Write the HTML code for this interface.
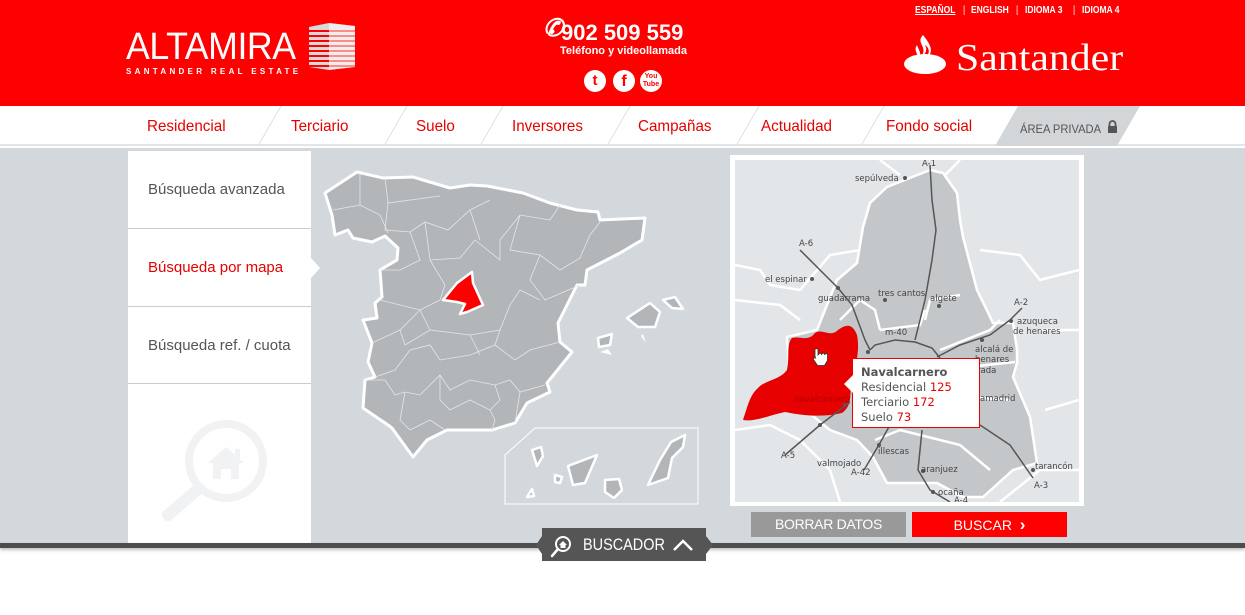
<!DOCTYPE html>
<html><head><meta charset="utf-8"><style>
*{margin:0;padding:0;box-sizing:border-box}
body{width:1245px;height:615px;overflow:hidden;background:#fff;font-family:"Liberation Sans",sans-serif;position:relative}
.abs{position:absolute}
#hdr{left:0;top:0;width:1245px;height:106px;background:#ff0000}
#nav{left:0;top:106px;width:1245px;height:40px;background:#fff;border-bottom:2px solid #e2e4e6}
.ni{position:absolute;top:118px;font-size:16px;color:#e60000;white-space:nowrap;transform:scaleX(.95);transform-origin:left}
.sep{position:absolute;top:106px;width:1px;height:39px;background:#dcdcdc;transform:skewX(-30deg);transform-origin:bottom}
#main{left:0;top:148px;width:1245px;height:395px;background:#d3d8dc}
#side{left:128px;top:151px;width:183px;height:392px;background:#fff}
.si{position:absolute;left:20px;font-size:15px;color:#555;white-space:nowrap}
.hl{position:absolute;left:0;width:183px;height:1px;background:#ccc}
#bar{left:0;top:543px;width:1245px;height:5px;background:#4d4d4d;box-shadow:0 2px 3px rgba(0,0,0,.25)}
.lang{position:absolute;top:5px;font-size:10px;font-weight:bold;color:#fff;white-space:nowrap;transform:scaleX(.85);transform-origin:left}
.ml{font-family:"DejaVu Sans",sans-serif;font-size:8.5px;fill:#444}
</style></head><body>
<div id="hdr" class="abs"></div>
<div class="abs" style="left:126px;top:27px;color:#fff;font-size:38px;line-height:40px;letter-spacing:-0.5px;transform:scaleX(.94);transform-origin:left">ALTAMIRA</div>
<div class="abs" style="left:126px;top:67px;color:#fff;font-size:8px;font-weight:bold;letter-spacing:3.3px;white-space:nowrap">SANTANDER REAL ESTATE</div>
<svg class="abs" style="left:307px;top:23px" width="50" height="48">
<path d="M2 4 L22 0 L48 3 L48 44 L22 47 L2 44Z" fill="#d9d9d9"/>
<g stroke="#ff0000" stroke-width="2">
<line x1="0" y1="8" x2="50" y2="8"/><line x1="0" y1="13" x2="50" y2="13"/><line x1="0" y1="18" x2="50" y2="18"/><line x1="0" y1="23" x2="50" y2="23"/><line x1="0" y1="28" x2="50" y2="28"/><line x1="0" y1="33" x2="50" y2="33"/><line x1="0" y1="38" x2="50" y2="38"/><line x1="0" y1="43" x2="50" y2="43"/></g>
<path d="M22 0 L48 3 L48 44 L22 47Z" fill="#fff" opacity=".55"/>
</svg>
<div class="abs" style="left:543px;top:14px;color:#fff;font-size:24px;font-style:italic;font-weight:bold">&#x2706;</div>
<div class="abs" style="left:561px;top:20px;color:#fff;font-size:22px;font-weight:bold;white-space:nowrap">902 509 559</div>
<div class="abs" style="left:560px;top:45px;color:#fff;font-size:11px;font-weight:bold;white-space:nowrap">Teléfono y videollamada</div>
<div class="abs" style="left:584px;top:70px;width:22px;height:22px;border-radius:50%;background:#fff;color:#f00;font-weight:bold;font-size:15px;text-align:center;line-height:22px">t</div>
<div class="abs" style="left:613px;top:70px;width:22px;height:22px;border-radius:50%;background:#fff;color:#f00;font-weight:bold;font-size:16px;text-align:center;line-height:23px">f</div>
<div class="abs" style="left:640px;top:70px;width:22px;height:22px;border-radius:50%;background:#fff;color:#f00;font-weight:bold;font-size:7px;text-align:center;line-height:8px;padding-top:3px">You<br>Tube</div>
<div class="lang" style="left:915px;text-decoration:underline">ESPAÑOL</div>
<div class="lang" style="left:963px;font-weight:normal">|</div>
<div class="lang" style="left:971px">ENGLISH</div>
<div class="lang" style="left:1016px;font-weight:normal">|</div>
<div class="lang" style="left:1025px">IDIOMA 3</div>
<div class="lang" style="left:1073px;font-weight:normal">|</div>
<div class="lang" style="left:1082px">IDIOMA 4</div>
<svg class="abs" style="left:903px;top:33px" width="44" height="42">
<ellipse cx="22" cy="31" rx="21" ry="10" fill="#fff"/>
<path d="M20 2 C12 10 26 14 18 24 C24 20 24 16 22 12 C28 16 26 22 22 26 C32 20 28 12 20 2Z" fill="#fff"/>
<path d="M14 12 C10 18 16 20 14 26 C20 22 16 18 14 12Z" fill="#fff"/>
</svg>
<div class="abs" style="left:956px;top:36px;color:#fff;font-family:'Liberation Serif',serif;font-size:38px;white-space:nowrap;transform:scaleX(1.1);transform-origin:left">Santander</div>
<div id="nav" class="abs"></div>
<div class="ni" style="left:147px">Residencial</div>
<div class="ni" style="left:291px">Terciario</div>
<div class="ni" style="left:416px">Suelo</div>
<div class="ni" style="left:512px">Inversores</div>
<div class="ni" style="left:638px">Campañas</div>
<div class="ni" style="left:761px">Actualidad</div>
<div class="ni" style="left:886px">Fondo social</div>
<div class="sep" style="left:258px"></div><div class="sep" style="left:384px"></div><div class="sep" style="left:480px"></div><div class="sep" style="left:607px"></div><div class="sep" style="left:736px"></div><div class="sep" style="left:861px"></div>
<svg class="abs" style="left:995px;top:106px" width="146" height="40"><path d="M23 0 L145 0 L122 40 L0 40Z" fill="#d3d6d9"/></svg>
<div class="abs" style="left:1020px;top:122px;font-size:12px;color:#555;white-space:nowrap;transform:scaleX(.93);transform-origin:left">ÁREA PRIVADA</div>
<svg class="abs" style="left:1107px;top:120px" width="11" height="13"><path d="M2.5 6 V4 a3 3 0 0 1 6 0 V6" stroke="#555" stroke-width="1.8" fill="none"/><rect x="1" y="6" width="9" height="7" fill="#555"/></svg>
<div id="main" class="abs"></div>
<div id="side" class="abs">
<div class="si" style="top:30px">Búsqueda avanzada</div>
<div class="hl" style="top:77px"></div>
<div class="si" style="top:108px;color:#e60000">Búsqueda por mapa</div>
<div class="hl" style="top:155px"></div>
<div class="si" style="top:186px">Búsqueda ref. / cuota</div>
<div class="hl" style="top:232px"></div>
</div>
<svg class="abs" style="left:311px;top:258px" width="10" height="20"><path d="M0 0 L9 10 L0 20Z" fill="#fff"/></svg>
<svg class="abs" style="left:158px;top:413px" width="115" height="110">
<circle cx="68" cy="48" r="37" fill="none" stroke="#f1f2f3" stroke-width="8"/>
<path d="M50 50 L68 34 L86 50 L81 50 L81 66 L73 66 L73 56 L63 56 L63 66 L55 66 L55 50Z M77 36 h5 v10 h-5z" fill="#f1f2f3"/>
<line x1="38" y1="78" x2="10" y2="102" stroke="#f1f2f3" stroke-width="12" stroke-linecap="round"/>
</svg>
<svg class="abs" style="left:311px;top:148px" width="420" height="395" viewBox="311 148 420 395">
<path d="M325,193 357,172 383,178 413,177 450,188 470,185 487,186 523,193 550,203 577,210 598,212 600,220 645,218 642,240 620,253 587,270 585,285 577,285 558,323 560,342 572,352 547,383 550,392 527,403 515,423 492,430 447,430 427,440 413,457 392,428 388,425 363,408 365,380 375,377 368,362 372,343 363,320 377,318 375,303 382,297 380,270 397,260 398,248 385,236 372,242 353,238 348,230 335,235 332,215Z" fill="#b3b6b9" stroke="#fff" stroke-width="3" stroke-linejoin="round"/>
<g fill="none" stroke="#e4e6e8" stroke-width="0.8">
<path d="M360 173 L360 205 L380 215 L388 233"/><path d="M333 210 L360 205"/><path d="M385 178 L388 203 L440 196"/><path d="M388 203 L385 230 L410 232 L425 222 L448 230 L470 210 L490 200"/>
<path d="M425 222 L430 260 L460 258 L475 240 L500 260 L500 240 L520 215 L550 220 L560 205"/><path d="M410 232 L420 260 L400 270 L380 270"/>
<path d="M470 210 L480 240"/><path d="M520 215 L510 250 L540 255 L560 270 L580 258 L590 235 L600 222"/><path d="M540 255 L530 280 L545 300 L580 285"/>
<path d="M380 300 L420 310 L440 300 L445 285 L430 260"/><path d="M420 310 L430 330 L470 335 L500 330 L510 305 L520 290 L540 300"/>
<path d="M372 343 L400 330 L420 310"/><path d="M400 330 L405 345 L430 330"/><path d="M375 377 L395 370 L410 350 L430 345 L440 360 L470 355 L495 345 L515 360 L530 350 L560 342"/>
<path d="M365 380 L385 380 L395 395 L405 392 L420 395 L440 375 L450 390 L470 380 L495 385 L510 380 L520 392 L545 385"/>
<path d="M405 392 L400 420 L410 430 L430 420 L445 430"/><path d="M440 375 L440 400 L450 410 L470 400 L490 410 L495 420 L492 430"/><path d="M500 330 L495 345"/>
<path d="M470 335 L480 355"/><path d="M495 385 L500 400 L490 410"/><path d="M520 392 L515 423"/>
</g>
<path d="M443,300 457,283 472,272 473,283 483,305 467,312 460,314 465,304 457,302Z" fill="#ff0000" stroke="#fff" stroke-width="2.5" stroke-linejoin="round"/>
<g fill="#b3b6b9" stroke="#fff" stroke-width="2.5" stroke-linejoin="round">
<path d="M627,318 650,303 660,312 655,327 638,327Z"/><path d="M663,300 675,297 683,309 672,308Z"/><path d="M598,338 612,334 610,345 599,347Z"/>
</g>
<path d="M600,352 612,355 608,349Z M641,336 646,343 643,334Z" fill="#fff"/>
<path d="M505,455 L535,428 L698,428 L698,504 L505,504Z" fill="none" stroke="#fff" stroke-width="1"/>
<g fill="#b3b6b9" stroke="#fff" stroke-width="2.5" stroke-linejoin="round">
<path d="M532,450 541,447 543,456 537,466Z"/><path d="M555,475 562,477 560,483 555,482Z"/><path d="M568,466 597,455 585,483 573,485Z"/><path d="M605,480 619,479 622,490 614,498 605,492Z"/><path d="M648,485 660,460 668,447 671,442 685,435 683,447 672,458 668,478Z"/><path d="M527,497 532,489 534,496Z"/>
</g>
</svg>
<div class="abs" style="left:730px;top:155px;width:354px;height:351px;background:#fff"></div>
<svg class="abs" style="left:735px;top:160px" width="344" height="342" viewBox="735 160 344 342">
<rect x="735" y="160" width="344" height="342" fill="#e3e6e9"/>
<g fill="none" stroke="#fff" stroke-width="2.5">
<path d="M735 265 L760 270 L770 285 L800 290 L830 255 L860 250"/><path d="M735 300 L780 305 L800 320"/><path d="M1079 270 L1040 280 L1020 255 L980 250"/><path d="M1079 330 L1040 330"/><path d="M1079 400 L1045 410"/><path d="M735 430 L770 425 L800 440 L830 470 L840 502"/><path d="M1079 470 L1040 470 L1000 502"/><path d="M960 160 L945 175"/><path d="M880 160 L900 175"/>
</g>
<path d="M857,263 863,227 870,203 887,187 930,170 943,173 957,193 960,220 963,237 977,290 993,323 1013,323 1017,350 1017,363 1013,377 1030,417 1037,463 1013,470 983,497 963,497 937,483 887,483 873,457 857,440 830,430 797,403 763,410 790,383 787,337 817,330 837,280Z" fill="#c4c7ca" stroke="#fff" stroke-width="2.5" stroke-linejoin="round"/>
<g fill="none" stroke="#fff" stroke-width="2.5">
<path d="M880 330 L920 325 L925 310 L920 320"/><path d="M880 330 L875 310 L860 300 L840 320"/><path d="M940 350 L990 330 L1000 320"/><path d="M940 370 L1015 362"/><path d="M940 395 L1010 400"/><path d="M900 430 L960 445 L990 470"/><path d="M875 440 L900 430"/><path d="M925 320 L930 300 L960 295"/>
</g>
<path d="M743,420 C748,405 750,395 758,388 C765,380 780,380 787,370 C790,355 786,345 792,338 C800,336 808,342 815,333 C822,328 830,338 838,330 C845,325 852,322 857,335 C860,350 856,365 852,380 C849,395 853,405 842,413 C820,418 800,415 785,412 C770,415 755,422 743,420Z" fill="#e60000"/>
<g fill="none" stroke="#555" stroke-width="1.5">
<path d="M930 165 L932 200 L936 230 L932 260 L925 300 L915 340"/>
<path d="M800 250 L820 270 L838 288 L852 305 L865 340 L870 350"/>
<path d="M870 350 L875 345 L895 340 L915 342 L932 348 L940 358"/>
<path d="M937 357 L960 345 L990 335 L1010 320 L1022 308"/>
<path d="M785 455 L820 425 L850 402"/>
<path d="M864 470 L880 443 L890 425"/>
<path d="M922 430 L918 470 L930 490 L950 502"/>
<path d="M980 425 L1010 445 L1033 478"/>
</g>
<g fill="#555"><circle cx="905" cy="178" r="2"/><circle cx="812" cy="279" r="2"/><circle cx="838" cy="288" r="2"/><circle cx="885" cy="300" r="2"/><circle cx="939" cy="306" r="2"/><circle cx="1011" cy="321" r="2"/><circle cx="982" cy="340" r="2"/><circle cx="868" cy="352" r="2"/><circle cx="820" cy="425" r="2"/><circle cx="879" cy="445" r="2"/><circle cx="923" cy="471" r="2"/><circle cx="933" cy="492" r="2"/><circle cx="1033" cy="470" r="2"/><circle cx="845" cy="405" r="2"/></g>
<g class="ml">
<text x="922" y="166">A-1</text><text x="855" y="181">sepúlveda</text><text x="799" y="246">A-6</text><text x="765" y="282">el espinar</text><text x="818" y="301">guadarrama</text><text x="878" y="296">tres cantos</text><text x="930" y="301">algete</text><text x="1014" y="305">A-2</text><text x="1017" y="324">azuqueca</text><text x="1013" y="334">de henares</text><text x="975" y="352">alcalá de</text><text x="975" y="362">henares</text><text x="977" y="373">rada</text><text x="980" y="401">amadrid</text><text x="885" y="335">m-40</text><text x="817" y="466">valmojado</text><text x="781" y="458">A-5</text><text x="878" y="454">illescas</text><text x="851" y="475">A-42</text><text x="921" y="472">aranjuez</text><text x="938" y="495">ocaña</text><text x="954" y="503">A-4</text><text x="1035" y="469">tarancón</text><text x="1034" y="488">A-3</text>
<text x="794" y="402" style="fill:#b00000">navalcarnero</text>
</g>
<path d="M815 356 l0 -6 a1.5 1.5 0 0 1 3 0 l0 5 l1 -1 a1.3 1.3 0 0 1 2.5 0.5 l0.5 -0.5 a1.3 1.3 0 0 1 2.5 0.5 l0.5 0 a1.3 1.3 0 0 1 2.5 1 l0 5 l-3 5 l-7 0 l-4 -6 a1.3 1.3 0 0 1 2 -1.5z" fill="#fff" stroke="#333" stroke-width="0.8"/>
</svg>
<div class="abs" style="left:852px;top:358px;width:128px;height:70px;background:#fff;border:1px solid #e60000;font-family:'DejaVu Sans',sans-serif;font-size:11.5px;color:#555;line-height:15px;padding:6px 0 0 8px;white-space:nowrap">
<b>Navalcarnero</b><br>Residencial <span style="color:#e60000">125</span><br>Terciario <span style="color:#e60000">172</span><br>Suelo <span style="color:#e60000">73</span></div>
<svg class="abs" style="left:843px;top:375px" width="11" height="18"><path d="M10 0 L1 9 L10 18Z" fill="#fff"/></svg>
<div class="abs" style="left:751px;top:512px;width:155px;height:25px;background:#999;color:#fff;font-size:14px;text-align:center;line-height:25px;letter-spacing:-0.3px">BORRAR DATOS</div>
<div class="abs" style="left:912px;top:512px;width:155px;height:25px;background:#ff0000;color:#fff;font-size:14px;text-align:center;line-height:25px">BUSCAR &nbsp;<b style="font-size:17px">&#x203A;</b></div>
<div id="bar" class="abs"></div>
<svg class="abs" style="left:536px;top:528px" width="178" height="34"><path d="M6 0 L170 0 L170 8 L177 17 L170 26 L170 33 L6 33 L6 26 L0 17 L6 8Z" fill="#555"/>
<circle cx="27" cy="16" r="7" fill="none" stroke="#fff" stroke-width="2"/><path d="M23 17 L27 13 L31 17 L29.5 17 L29.5 20 L24.5 20 L24.5 17Z" fill="#fff"/><line x1="22" y1="21" x2="16" y2="28" stroke="#fff" stroke-width="2.5" stroke-linecap="round"/>
<path d="M138 22 L147 13 L156 22" stroke="#fff" stroke-width="2.5" fill="none"/></svg>
<div class="abs" style="left:583px;top:535px;color:#fff;font-size:17px;white-space:nowrap;transform:scaleX(.85);transform-origin:left">BUSCADOR</div>
</body></html>
